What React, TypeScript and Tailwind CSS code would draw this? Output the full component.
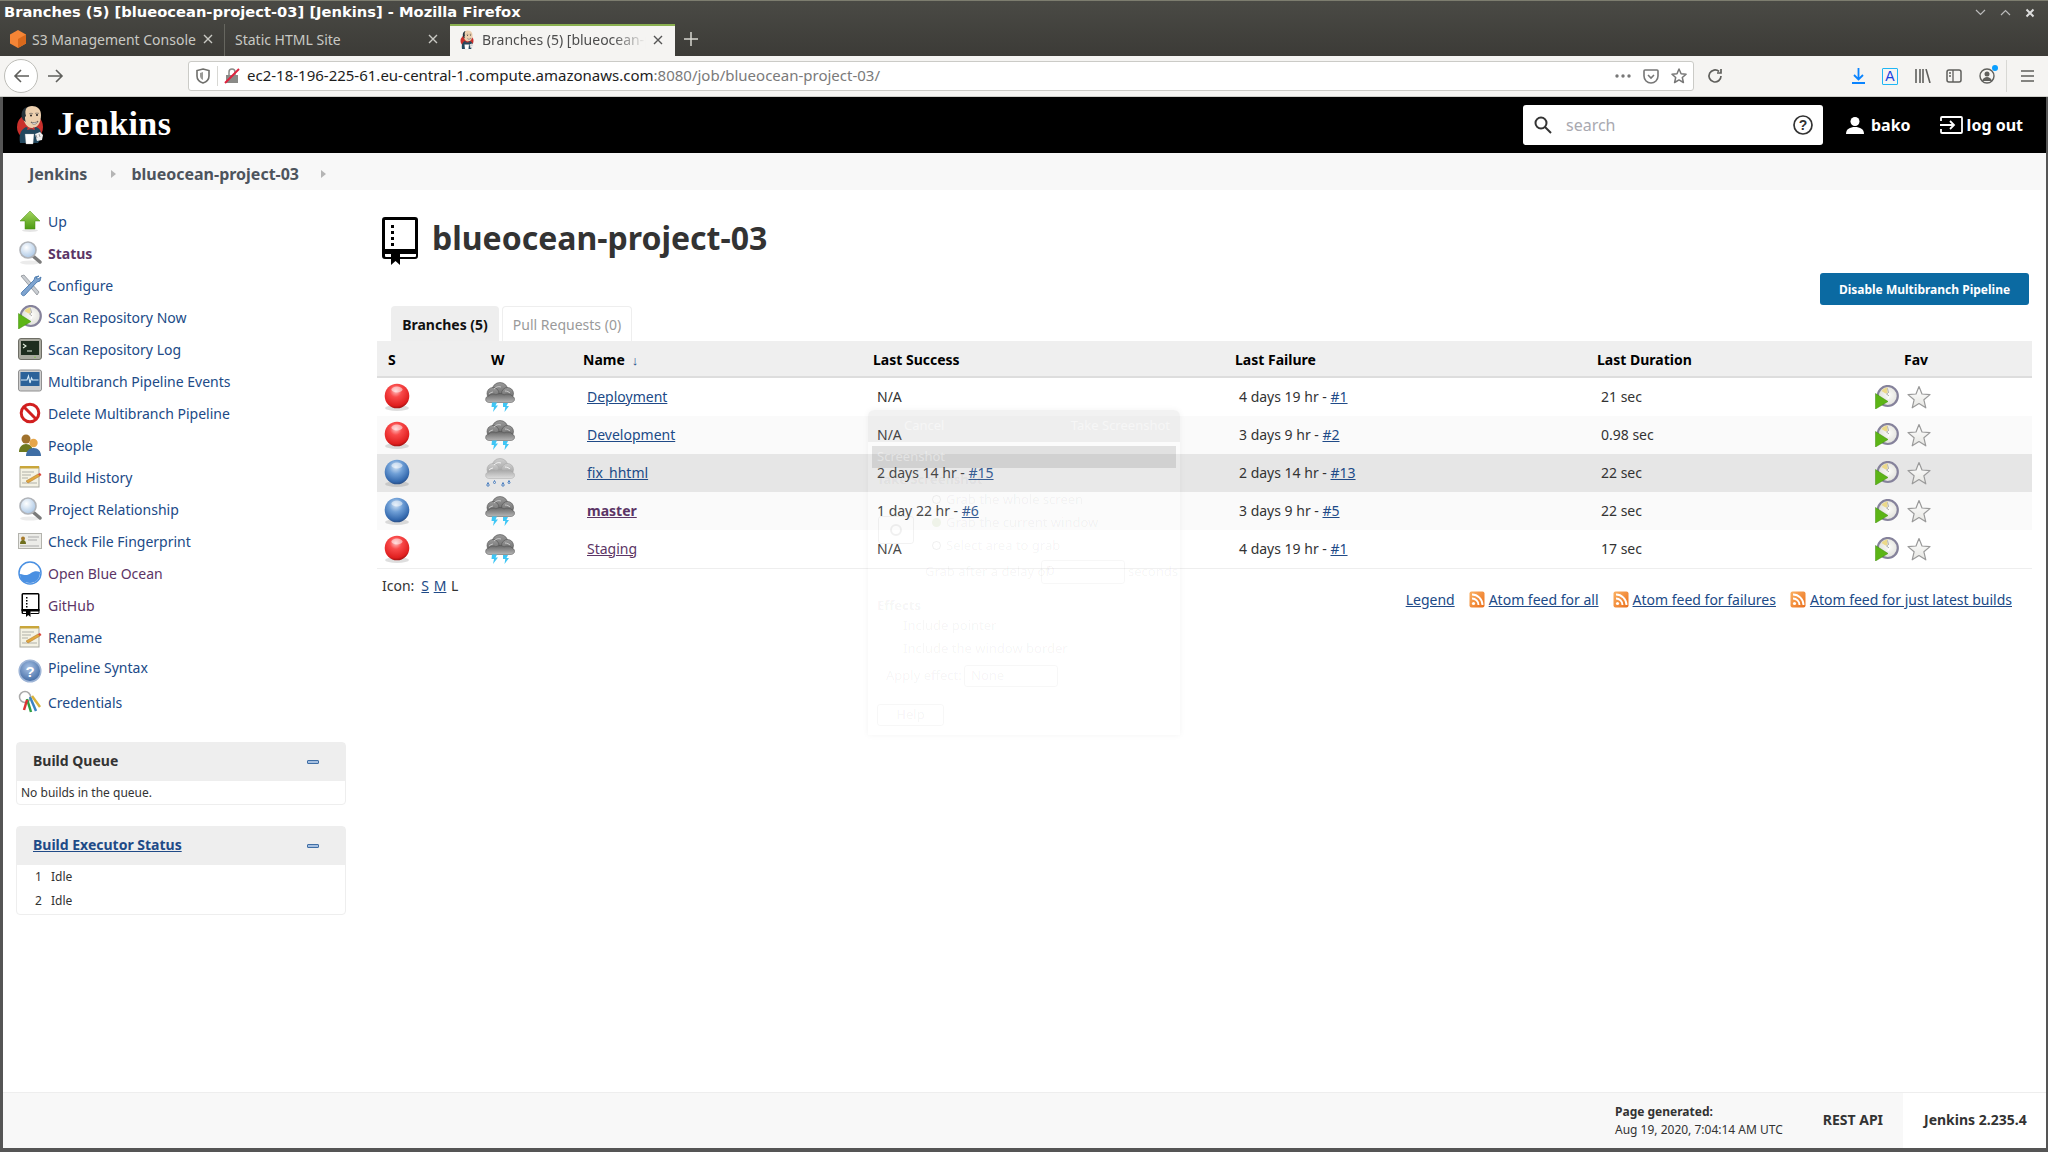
import React from "react";

const Defs = () => (
  <svg className="absolute w-0 h-0" aria-hidden="true">
    <defs>
      <radialGradient id="red" cx="45%" cy="30%" r="70%">
        <stop offset="0" stopColor="#ffc0c0" />
        <stop offset="0.35" stopColor="#f94a4a" />
        <stop offset="0.85" stopColor="#e01f1f" />
        <stop offset="1" stopColor="#a51212" />
      </radialGradient>
      <radialGradient id="blue" cx="45%" cy="30%" r="70%">
        <stop offset="0" stopColor="#d4e4f5" />
        <stop offset="0.4" stopColor="#6f9fd6" />
        <stop offset="0.85" stopColor="#3469ae" />
        <stop offset="1" stopColor="#2a4f87" />
      </radialGradient>
      <linearGradient id="cloud" x1="0" y1="0" x2="0" y2="1">
        <stop offset="0" stopColor="#9a9a9a" />
        <stop offset="1" stopColor="#666666" />
      </linearGradient>
      <linearGradient id="cloudb" x1="0" y1="0" x2="0" y2="1">
        <stop offset="0" stopColor="#666666" />
        <stop offset="1" stopColor="#b5b5b5" />
      </linearGradient>
      <linearGradient id="cloudl" x1="0" y1="0" x2="0" y2="1">
        <stop offset="0" stopColor="#cfcfcf" />
        <stop offset="1" stopColor="#9a9a9a" />
      </linearGradient>
      <linearGradient id="cloudlb" x1="0" y1="0" x2="0" y2="1">
        <stop offset="0" stopColor="#a5a5a5" />
        <stop offset="1" stopColor="#dddddd" />
      </linearGradient>
      <radialGradient id="dial" cx="55%" cy="45%" r="60%">
        <stop offset="0" stopColor="#fbfbf8" />
        <stop offset="1" stopColor="#dcdcd6" />
      </radialGradient>
      <linearGradient id="greenup" x1="0" y1="0" x2="0" y2="1">
        <stop offset="0" stopColor="#a4d55e" />
        <stop offset="1" stopColor="#4c9a13" />
      </linearGradient>
      <linearGradient id="rss" x1="0" y1="0" x2="1" y2="1">
        <stop offset="0" stopColor="#fbb163" />
        <stop offset="1" stopColor="#ea6f1c" />
      </linearGradient>
      <radialGradient id="lens" cx="40%" cy="35%" r="70%">
        <stop offset="0" stopColor="#ffffff" />
        <stop offset="1" stopColor="#a6c4e4" />
      </radialGradient>
      <radialGradient id="q" cx="45%" cy="35%" r="70%">
        <stop offset="0" stopColor="#a9c3e6" />
        <stop offset="1" stopColor="#3a649f" />
      </radialGradient>
      <linearGradient id="star" x1="0" y1="0" x2="0" y2="1">
        <stop offset="0" stopColor="#ffffff" />
        <stop offset="1" stopColor="#e6e6e2" />
      </linearGradient>
    </defs>
  </svg>
);

const Ball = ({ color }: { color: "red" | "blue" }) => (
  <svg width="26" height="28" viewBox="0 0 26 28" className="block">
    <ellipse cx="13" cy="25" rx="12" ry="3" fill="#000" opacity="0.13" />
    <circle cx="13" cy="13" r="12.3" fill={`url(#${color})`} />
    <ellipse cx="13" cy="6.5" rx="5.5" ry="3" fill="#fff" opacity="0.5" />
  </svg>
);

const Weather = ({ rain }: { rain?: boolean }) => {
  const top = rain ? "url(#cloudl)" : "url(#cloud)";
  const bottom = rain ? "url(#cloudlb)" : "url(#cloudb)";
  const edge = rain ? "#a8a8a8" : "#4f4f4f";
  return (
    <svg width="30" height="30" viewBox="0 0 30 30" className="block">
      <circle cx="15" cy="8.500" r="8" fill={top} stroke={edge} strokeWidth="0.600" />
      <circle cx="22.500" cy="11.500" r="6" fill={top} stroke={edge} strokeWidth="0.600" />
      <circle cx="8" cy="11.500" r="6" fill={top} stroke={edge} strokeWidth="0.600" />
      <path d="M1 19c-1-2 0-5 3-5 1-2 5-3 7-1 2-2 6-2 8 0 3-2 7-1 8 1 3 1 3 4 2 5-1 1-2 1.500-3 1.500H4c-1 0-2-.5-3-1.500z" fill={bottom} stroke={edge} strokeWidth="0.500" />
      <path d="M9 7c2-2 4-3 7-2M4 12c1-1 3-2 4-2M20 9c2 0 4 1 5 2" fill="none" stroke={rain ? "#f2f2f2" : "#c9c9c9"} strokeWidth="1" />
      {rain ? (
        <g fill="none" stroke="#4a7fc0" strokeWidth="1">
          <path d="M3 24.500l-1.200 2.500a1.200 1.200 0 1 0 2.400 0zM9.500 22.500l-1 2a1 1 0 1 0 2 0zM18 24.500l-1.200 2.500a1.200 1.200 0 1 0 2.400 0zM24 22.500l-1 2a1 1 0 1 0 2 0z" />
        </g>
      ) : (
        <g fill="#3fc6f5">
          <path d="M7 20.500h5l-1.500 3h2.500l-5 6.500 1-5H6.500zM18 21h5l-1.500 3H24l-4.500 6 .8-5H18z" />
        </g>
      )}
    </svg>
  );
};

const ClockPlay = ({ s = 24 }: { s?: number }) => (
  <svg width={s} height={s} viewBox="0 0 24 24" className="block">
    <circle cx="12.800" cy="11" r="10" fill="url(#dial)" stroke="#85829b" strokeWidth="2.200" />
    <path d="M13 2.500v7.500L6.500 6c1.500-2 4-3.500 6.500-3.500z" fill="#ecd98a" />
    <path d="M12.500 3.500l1 4-2 1.500 2.500 2-1 3" fill="none" stroke="#fff" strokeWidth="1.300" />
    <path d="M12.500 3.500l1 4-2 1.500 2.500 2" fill="none" stroke="#555" strokeWidth="0.500" />
    <path d="M0.500 8.500L13 16.500 0.500 24z" fill="#5cb516" stroke="#3f8d08" strokeWidth="0.500" />
  </svg>
);

const Star = () => (
  <svg width="24" height="24" viewBox="0 0 24 24" className="block">
    <path d="M12 1.500l3 7.500 8 .6-6.100 5.200 1.900 8L12 18.500 5.200 22.800l1.900-8L1 9.600l8-.6z" fill="url(#star)" stroke="#9a9a9a" strokeWidth="1.200" strokeLinejoin="round" />
  </svg>
);

const Rss = () => (
  <svg width="16" height="17" viewBox="0 0 16 17" className="block">
    <rect x="0.500" y="0.500" width="15" height="16" rx="2" fill="url(#rss)" />
    <circle cx="4.500" cy="12.500" r="1.600" fill="#fff" />
    <path d="M3 7.500a6.500 6.500 0 0 1 6.500 6.500M3 3.500a10.500 10.500 0 0 1 10.500 10.500" fill="none" stroke="#fff" strokeWidth="1.900" />
  </svg>
);

const Lens = () => (
  <svg width="24" height="24" viewBox="0 0 24 24" className="block">
    <ellipse cx="12" cy="21.500" rx="10" ry="2" fill="#000" opacity="0.08" />
    <path d="M15 15l7 6" stroke="#7b7b7b" strokeWidth="3.500" strokeLinecap="round" />
    <circle cx="10" cy="9" r="8" fill="url(#lens)" stroke="#b0b3b8" strokeWidth="1.600" />
  </svg>
);

const Notepad = () => (
  <svg width="24" height="24" viewBox="0 0 24 24" className="block">
    <rect x="2" y="2" width="19" height="20" fill="#f4f2e4" stroke="#a9a9a0" strokeWidth="1" />
    <rect x="2" y="1" width="19" height="2.500" fill="#c9a63b" />
    <path d="M4 7h12M4 10h9M4 13h6M4 18h15" stroke="#b0b0a8" strokeWidth="1" />
    <path d="M8 16l12-7 2 2-12 7z" fill="#e2a73d" stroke="#a9752a" strokeWidth="0.500" />
    <path d="M20 9l2-1 1.500 2-1.500 1z" fill="#d9453a" />
  </svg>
);

const BookIcon = ({ w, h }: { w: number; h: number }) => (
  <svg width={w} height={h} viewBox="0 0 36 48" className="block">
    <path fillRule="evenodd" d="M3 0h30a3 3 0 0 1 3 3v36a3 3 0 0 1-3 3H18v-2h15a1 1 0 0 0 1-1v-2H3v2a1 1 0 0 0 1 1h5v2H3a3 3 0 0 1-3-3V3a3 3 0 0 1 3-3zM3 3v29h30V3z" fill="#000" />
    <path d="M9 8h3v3H9zM9 14h3v3H9zM9 20h3v3H9zM9 26h3v3H9z" fill="#000" />
    <path d="M9 36h9v12l-4.500-4-4.500 4z" fill="#000" />
    <rect x="0" y="32" width="36" height="4" fill="#000" />
  </svg>
);

const JenkinsHead = ({ h }: { h: number }) => (
  <svg height={h} width={(h * 30) / 40} viewBox="0 0 30 40" className="block">
    <circle cx="14" cy="22" r="13" fill="#c9302c" />
    <path d="M7 12C6 5 11 1 16 1s9 3 9 9c0 7-3 13-9 13-5 0-8-5-9-11z" fill="#eccfae" />
    <path d="M7 15C4 10 6 3 11 2c-2 3-2 6-1 9l-1 1c0 2 0 3 1 5z" fill="#26323a" />
    <circle cx="15" cy="10.500" r="1" fill="#231f20" />
    <circle cx="21" cy="10" r="1" fill="#231f20" />
    <path d="M13 9c1-1 3-1 4 0M19 8.500c1-.5 3-.5 4 0" fill="none" stroke="#555" strokeWidth="0.600" />
    <path d="M15 17c2 1 5 1 7-1-1 4-6 4-7 1z" fill="#fff" stroke="#231f20" strokeWidth="0.500" />
    <path d="M4 38c-1-8 0-13 6-16l5 2 5-2c5 2 6 6 5 11l-3 5H6z" fill="#23485e" />
    <path d="M12 22l3 2.500 3-2.500 1 3-4-1-4 1z" fill="#d33833" />
    <path d="M9 29h9l-1 10H10z" fill="#fff" stroke="#999" strokeWidth="0.300" />
    <path d="M19 29l5-2 3 3-1 5-5 1z" fill="#eee" />
    <path d="M20 30l1 3M23 29l1 3" stroke="#777" strokeWidth="0.700" />
  </svg>
);

const SideIcon = ({ name }: { name: string }) => {
  switch (name) {
    case "up":
      return (
        <svg width="24" height="24" viewBox="0 0 24 24" className="block">
          <ellipse cx="12" cy="21.500" rx="8" ry="1.500" fill="#000" opacity="0.1" />
          <path d="M12 2l10 10h-5v8H7v-8H2z" fill="url(#greenup)" stroke="#4a8d12" strokeWidth="0.500" />
        </svg>
      );
    case "lens":
      return <Lens />;
    case "config":
      return (
        <svg width="24" height="24" viewBox="0 0 24 24" className="block">
          <path d="M3 3l3-1 15 17-2 3z" fill="#c9cdd2" stroke="#8a8f96" strokeWidth="0.800" />
          <path d="M21 3l-4 1-1 3-12 12c-1 1-1 2 0 3s2 1 3 0L19 9l3-1 1-4-3 2-2-1z" fill="#7fa4cf" stroke="#3c6ea6" strokeWidth="0.800" />
        </svg>
      );
    case "clock":
      return <ClockPlay />;
    case "terminal":
      return (
        <svg width="24" height="24" viewBox="0 0 24 24" className="block">
          <rect x="0.500" y="1.500" width="23" height="21" rx="2.500" fill="#a9a99f" stroke="#6e6e66" />
          <rect x="3" y="4" width="18" height="14" fill="#1f2d1f" />
          <path d="M5 7l3 2-3 2M9 14h5" fill="none" stroke="#e6f0e0" strokeWidth="1.100" />
          <circle cx="17" cy="20.300" r="0.800" fill="#7fc241" />
        </svg>
      );
    case "events":
      return (
        <svg width="24" height="24" viewBox="0 0 24 24" className="block">
          <rect x="0.500" y="1" width="23" height="21" rx="2" fill="#cfcfcf" stroke="#909090" />
          <rect x="2.500" y="3" width="19" height="14" fill="#2c6299" />
          <path d="M3 11h6l1.500-4 1.500 7 1.500-5 1 2h6" fill="none" stroke="#d7ecf9" strokeWidth="1.100" />
        </svg>
      );
    case "delete":
      return (
        <svg width="24" height="24" viewBox="0 0 24 24" className="block">
          <circle cx="12" cy="12" r="8.800" fill="#fff" stroke="#d11f1f" strokeWidth="3" />
          <path d="M5.800 5.800l12.400 12.400" stroke="#d11f1f" strokeWidth="3" />
        </svg>
      );
    case "people":
      return (
        <svg width="24" height="24" viewBox="0 0 24 24" className="block">
          <circle cx="8" cy="6" r="4.500" fill="#a0722d" />
          <path d="M1 19c0-5 3-8 7-8s7 3 7 8z" fill="#6d7a1f" />
          <circle cx="15.500" cy="10" r="4.200" fill="#e6a64a" />
          <path d="M8 23c0-5 3-8 7.500-8S23 18 23 23z" fill="#3f6ea5" />
        </svg>
      );
    case "notepad":
      return <Notepad />;
    case "finger":
      return (
        <svg width="24" height="24" viewBox="0 0 24 24" className="block">
          <rect x="0.500" y="4.500" width="23" height="15" fill="#ecece8" stroke="#b3b3ad" />
          <circle cx="5" cy="9.500" r="2" fill="#a77a2b" />
          <path d="M2 15c0-3 1.500-4 3-4s3 1 3 4z" fill="#70701f" />
          <path d="M10 8h11M10 11h9M2 17h19" stroke="#aaa" strokeWidth="1" />
        </svg>
      );
    case "ocean":
      return (
        <svg width="24" height="24" viewBox="0 0 24 24" className="block">
          <circle cx="12" cy="12" r="11" fill="#fff" stroke="#4a90e2" strokeWidth="1.500" />
          <path d="M2 13c5 1 7 2 11-1 3-2 6-2 9-1 0 7-4 11-10 11S2 19 2 13z" fill="#4a90e2" />
        </svg>
      );
    case "book":
      return <BookIcon w={19} h={24} />;
    case "help":
      return (
        <svg width="24" height="24" viewBox="0 0 24 24" className="block">
          <circle cx="12" cy="12" r="10.800" fill="url(#q)" stroke="#9db4d6" strokeWidth="1.500" />
          <text x="12" y="17.500" textAnchor="middle" fontSize="15" fontWeight="700" fill="#fff" fontFamily="'Liberation Sans',sans-serif">?</text>
        </svg>
      );
    case "keys":
      return (
        <svg width="24" height="24" viewBox="0 0 24 24" className="block">
          <circle cx="7" cy="7" r="5.500" fill="none" stroke="#aaa" strokeWidth="1.500" />
          <path d="M9 9l4 13" stroke="#2f9e44" strokeWidth="2.500" />
          <path d="M12 7l6 14" stroke="#3b82c4" strokeWidth="2.500" />
          <path d="M14 6l8 11" stroke="#d9b23a" strokeWidth="2.500" />
          <path d="M9 10l-3 10" stroke="#d33" strokeWidth="2.500" />
        </svg>
      );
  }
  return null;
};

type Item = { label: string; icon: string; visited?: boolean; bold?: boolean };
const items: Item[] = [
  { label: "Up", icon: "up" },
  { label: "Status", icon: "lens", visited: true, bold: true },
  { label: "Configure", icon: "config" },
  { label: "Scan Repository Now", icon: "clock" },
  { label: "Scan Repository Log", icon: "terminal" },
  { label: "Multibranch Pipeline Events", icon: "events" },
  { label: "Delete Multibranch Pipeline", icon: "delete" },
  { label: "People", icon: "people" },
  { label: "Build History", icon: "notepad" },
  { label: "Project Relationship", icon: "lens" },
  { label: "Check File Fingerprint", icon: "finger" },
  { label: "Open Blue Ocean", icon: "ocean", visited: true },
  { label: "GitHub", icon: "book", visited: true },
  { label: "Rename", icon: "notepad" },
];

const Minus = () => (
  <div className="w-[12px] h-[4px] mt-[2px] bg-[#a5bfe0] border border-[#3f6ea5] rounded-[1px]" />
);

const rows = [
  { ball: "red" as const, name: "Deployment", succ: "N/A", succL: "", fail: "4 days 19 hr - ", failL: "#1", dur: "21 sec", bg: "bg-white" },
  { ball: "red" as const, name: "Development", succ: "N/A", succL: "", fail: "3 days 9 hr - ", failL: "#2", dur: "0.98 sec", bg: "bg-[#fafafa]" },
  { ball: "blue" as const, name: "fix_hhtml", succ: "2 days 14 hr - ", succL: "#15", fail: "2 days 14 hr - ", failL: "#13", dur: "22 sec", bg: "bg-[#e6e6e6]", rain: true },
  { ball: "blue" as const, name: "master", succ: "1 day 22 hr - ", succL: "#6", fail: "3 days 9 hr - ", failL: "#5", dur: "22 sec", bg: "bg-[#fafafa]", bold: true },
  { ball: "red" as const, name: "Staging", succ: "N/A", succL: "", fail: "4 days 19 hr - ", failL: "#1", dur: "17 sec", bg: "bg-white", visited: true },
];

const Tab = ({ children, close, active, cls }: { children: React.ReactNode; close: boolean; active?: boolean; cls: string }) => (
  <div className={`flex items-center h-full ${cls} ${active ? "bg-[#f5f4f2] border-t-2 border-[#8ab050] text-[#4d4d4d] pb-[3px]" : "text-[#c9c9c4] pb-[2px]"}`}>
    {children}
    {close && (
      <span className="ml-auto">
        <svg width="12" height="12" viewBox="0 0 12 12" className="block">
          <path d="M2 2l8 8M10 2l-8 8" stroke={active ? "#555" : "#c9c9c4"} strokeWidth="1.400" />
        </svg>
      </span>
    )}
  </div>
);

const Ghost = () => (
  <div className="absolute left-[868px] top-[410px] w-[312px] h-[325px] pointer-events-none rounded-t-[6px] shadow-[0_0_6px_rgba(0,0,0,0.05)] bg-white/10 text-[13px] text-black/[0.05]">
    <div className="h-[32px] rounded-t-[6px] bg-black/[0.05] flex items-center justify-between px-[36px] pr-[10px] text-white/50 text-[13px]">
      <span>Cancel</span>
      <span>Take Screenshot</span>
    </div>
    <div className="mx-[4px] mt-[4px] h-[22px] bg-black/[0.1] flex items-center px-[5px] text-white/40 text-[13px]">Screenshot</div>
    <div className="pl-[9px] mt-[2px] font-bold h-[20px]">Take Screenshot</div>
    <div className="flex pl-[10px]">
      <div className="mt-[26px] w-[36px] h-[28px] border border-black/[0.05] rounded-[3px] flex items-center justify-center">
        <div className="w-[12px] h-[12px] rounded-full border-2 border-black/[0.06]" />
      </div>
      <div className="ml-[18px] flex flex-col gap-[5px] leading-[18px]">
        <div className="flex items-center gap-[5px]"><span className="w-[9px] h-[9px] rounded-full border border-black/[0.06]" /><span>Grab the whole screen</span></div>
        <div className="flex items-center gap-[5px]"><span className="w-[9px] h-[9px] rounded-full bg-[#8ab050]/10" /><span>Grab the current window</span></div>
        <div className="flex items-center gap-[5px]"><span className="w-[9px] h-[9px] rounded-full border border-black/[0.06]" /><span>Select area to grab</span></div>
      </div>
    </div>
    <div className="flex items-center pl-[57px] mt-[6px] h-[24px] whitespace-nowrap">
      <span className="w-[116px]">Grab after a delay of</span>
      <span className="w-[84px] h-[24px] border border-black/[0.03] rounded-[3px] pl-[5px]">0</span>
      <span className="ml-[3px]">seconds</span>
    </div>
    <div className="pl-[9px] mt-[12px] font-bold h-[18px]">Effects</div>
    <div className="pl-[35px] leading-[23px]">
      <div>Include pointer</div>
      <div>Include the window border</div>
    </div>
    <div className="flex items-center pl-[18px] mt-[4px] h-[23px]">
      <span className="w-[78px]">Apply effect:</span>
      <span className="w-[94px] h-[22px] border border-black/[0.03] rounded-[3px] pl-[6px]">None</span>
    </div>
    <div className="ml-[9px] mt-[17px] w-[67px] h-[22px] border border-black/[0.03] rounded-[3px] text-center">Help</div>
  </div>
);

const visited = "text-[#5c3566]";
const link = "text-[#204a87]";

export default function App() {
  return (
    <div className="relative w-[2048px] h-[1152px] overflow-hidden flex flex-col bg-white font-['Noto_Sans',sans-serif] text-[14px] text-[#333]">
      <Defs />
      {/* title bar */}
      <div className="h-[56px] shrink-0 flex flex-col bg-gradient-to-b from-[#4a4a45] to-[#3c3b37] border-t border-[#7d7d6f]">
        <div className="h-[23px] shrink-0 flex items-center pl-[4px] pr-[13px] text-white font-bold text-[14.700px] leading-none whitespace-nowrap font-['DejaVu_Sans',sans-serif]">
          <span>Branches (5) [blueocean-project-03] [Jenkins] - Mozilla Firefox</span>
          <div className="ml-auto flex items-center gap-[14px]">
            <svg width="11" height="7" viewBox="0 0 11 7"><path d="M1 1l4.500 4.500L10 1" fill="none" stroke="#bbb" strokeWidth="1.200" /></svg>
            <svg width="11" height="7" viewBox="0 0 11 7"><path d="M1 6l4.500-4.500L10 6" fill="none" stroke="#bbb" strokeWidth="1.200" /></svg>
            <svg width="10" height="10" viewBox="0 0 10 10"><path d="M1.500 1.500l7 7M8.500 1.500l-7 7" stroke="#ddd" strokeWidth="2" /></svg>
          </div>
        </div>
        <div className="flex-1 flex items-stretch text-[14px] whitespace-nowrap">
          <Tab close cls="w-[225px] pl-[9px] pr-[10px] border-r border-[#66665f]">
            <svg width="18" height="20" viewBox="0 0 18 20" className="mr-[5px]"><path d="M9 1l8 4.500v9L9 19l-8-4.500v-9z" fill="#f58536" /><path d="M9 10l8-4.500v9L9 19z" fill="#d9691c" /></svg>
            <span>S3 Management Console</span>
          </Tab>
          <Tab close cls="w-[225px] pl-[10px] pr-[11px]"><span>Static HTML Site</span></Tab>
          <Tab close active cls="w-[225px] pl-[10px] pr-[11px]">
            <JenkinsHead h={20} />
            <span className="ml-[7px] w-[164px] overflow-hidden [mask-image:linear-gradient(to_right,black_80%,transparent)]">Branches (5) [blueocean-project-03]</span>
          </Tab>
          <div className="flex items-center ml-[9px] pb-[2px]">
            <svg width="14" height="14" viewBox="0 0 14 14"><path d="M7 0v14M0 7h14" stroke="#d6d6d0" strokeWidth="1.500" /></svg>
          </div>
        </div>
      </div>
      {/* toolbar */}
      <div className="h-[41px] shrink-0 bg-[#f5f4f2] border-b border-[#cfcfcb] flex items-center">
        <div className="ml-[4px] w-[34px] h-[34px] rounded-full border border-[#bdbdb8] bg-white flex items-center justify-center">
          <svg width="17" height="16" viewBox="0 0 17 16"><path d="M16 8H2M8 2L2 8l6 6" fill="none" stroke="#5f5f5c" strokeWidth="1.600" /></svg>
        </div>
        <svg width="17" height="16" viewBox="0 0 17 16" className="ml-[9px]"><path d="M1 8h14M9 2l6 6-6 6" fill="none" stroke="#5f5f5c" strokeWidth="1.600" /></svg>
        <div className="ml-[124px] w-[1506px] h-[30px] bg-white border border-[#cbcbc7] rounded-[3px] flex items-center pl-[7px] pr-[6px] text-[15px] whitespace-nowrap">
          <svg width="14" height="16" viewBox="0 0 14 16"><path d="M7 1l6 1.500V8c0 3.500-3 6-6 7-3-1-6-3.500-6-7V2.500z" fill="none" stroke="#6f6f6c" strokeWidth="1.600" /><path d="M7 4v8c-2-1-3-2.500-3-4V5z" fill="#9b9b98" /></svg>
          <div className="ml-[7px] w-px h-[20px] bg-[#d8d8d4]" />
          <svg width="16" height="16" viewBox="0 0 16 16" className="ml-[6px]"><rect x="2" y="7" width="12" height="8" fill="#8a8a87" /><path d="M5 7V4a3 3 0 0 1 6 0v3" fill="none" stroke="#8a8a87" strokeWidth="1.500" /><path d="M1 15L15 1" stroke="#e0223e" strokeWidth="2" /></svg>
          <span className="ml-[7px] -mt-[1px] text-[#1d1d1d]">ec2-18-196-225-61.eu-central-1.compute.amazonaws.com</span>
          <span className="-mt-[1px] text-[#7a7a7a]">:8080/job/blueocean-project-03/</span>
          <div className="ml-auto flex items-center">
            <svg width="16" height="4" viewBox="0 0 16 4"><circle cx="2" cy="2" r="1.700" fill="#777" /><circle cx="8" cy="2" r="1.700" fill="#777" /><circle cx="14" cy="2" r="1.700" fill="#777" /></svg>
            <svg width="16" height="15" viewBox="0 0 16 15" className="ml-[12px]"><path d="M1 2a1 1 0 0 1 1-1h12a1 1 0 0 1 1 1v5a7 7 0 0 1-14 0z" fill="none" stroke="#777" strokeWidth="1.600" /><path d="M5 6l3 3 3-3" fill="none" stroke="#777" strokeWidth="1.600" /></svg>
            <svg width="16" height="16" viewBox="0 0 16 16" className="ml-[12px]"><path d="M8 1l2.100 4.700 5 .5-3.800 3.300 1.100 5L8 11.900 3.600 14.500l1.100-5L1 6.200l5-.5z" fill="none" stroke="#777" strokeWidth="1.500" strokeLinejoin="round" /></svg>
          </div>
        </div>
        <svg width="16" height="16" viewBox="0 0 16 16" className="ml-[13px]"><path d="M14 8a6 6 0 1 1-2-4.500M14 1v4h-4" fill="none" stroke="#5f5f5c" strokeWidth="1.700" /></svg>
        <svg width="13" height="16" viewBox="0 0 13 16" className="ml-[129px]"><path d="M6.500 0v11M2 7l4.500 4.500L11 7M0 15h13" fill="none" stroke="#0a84ff" strokeWidth="1.800" /></svg>
        <div className="ml-[17px] w-[16px] h-[17px] border border-[#1fb6f5] rounded-[1px] flex items-center justify-center text-[14px] leading-none text-[#1a3fe0] font-['Liberation_Sans',sans-serif]">A</div>
        <svg width="16" height="14" viewBox="0 0 16 14" className="ml-[17px]"><path d="M1 0v14M5 0v14M8 0v14M11 0l4 14" fill="none" stroke="#5f5f5c" strokeWidth="1.600" /></svg>
        <svg width="16" height="14" viewBox="0 0 16 14" className="ml-[15px]"><rect x="1" y="1" width="14" height="12" rx="2" fill="none" stroke="#5f5f5c" strokeWidth="1.500" /><path d="M7 1v12M3 4h2M3 7h2" stroke="#5f5f5c" strokeWidth="1.300" /></svg>
        <div className="relative ml-[17px] w-[16px] h-[16px]">
          <svg width="16" height="16" viewBox="0 0 16 16"><circle cx="8" cy="8" r="7" fill="none" stroke="#5f5f5c" strokeWidth="1.400" /><circle cx="8" cy="6" r="2.500" fill="#5f5f5c" /><path d="M3 13c1-3 3-4 5-4s4 1 5 4z" fill="#5f5f5c" /></svg>
          <span className="absolute -top-[3px] -right-[3px] w-[6px] h-[6px] rounded-full bg-[#0a9fff]" />
        </div>
        <div className="ml-[11px] w-px h-[32px] bg-[#d8d8d4]" />
        <svg width="13" height="12" viewBox="0 0 13 12" className="ml-[14px]"><path d="M0 1h13M0 6h13M0 11h13" stroke="#5f5f5c" strokeWidth="1.700" /></svg>
      </div>

      {/* page */}
      <div className="flex-1 min-h-0 flex flex-col border-l-[3px] border-r-[2px] border-b-[4px] border-[#555]">
        <header className="h-[56px] shrink-0 bg-black text-white flex items-center pl-[13px]">
          <JenkinsHead h={40} />
          <span className="ml-[11px] -mt-[3px] font-['Liberation_Serif',serif] font-bold text-[34px] leading-none tracking-[0.4px]">Jenkins</span>
          <div className="ml-auto w-[300px] h-[40px] mr-[23px] bg-white rounded-[3px] flex items-center pl-[11px] pr-[10px]">
            <svg width="18" height="18" viewBox="0 0 18 18"><circle cx="7" cy="7" r="5.500" fill="none" stroke="#333" strokeWidth="2" /><path d="M11 11l6 6" stroke="#333" strokeWidth="2" /></svg>
            <span className="ml-[14px] text-[16px] text-[#a9a9b0]">search</span>
            <svg width="20" height="20" viewBox="0 0 20 20" className="ml-auto"><circle cx="10" cy="10" r="9" fill="none" stroke="#333" strokeWidth="1.700" /><text x="10" y="15" textAnchor="middle" fontSize="14" fontWeight="700" fill="#333" fontFamily="'Liberation Sans',sans-serif">?</text></svg>
          </div>
          <svg width="18" height="17" viewBox="0 0 18 17"><circle cx="9" cy="4.500" r="4.500" fill="#fff" /><path d="M0 17c0-5 4-7 9-7s9 2 9 7z" fill="#fff" /></svg>
          <span className="ml-[7px] text-[16px] font-bold">bako</span>
          <svg width="23" height="18" viewBox="0 0 23 18" className="ml-[29px]"><path d="M1 5V2a1 1 0 0 1 1-1h19a1 1 0 0 1 1 1v14a1 1 0 0 1-1 1H2a1 1 0 0 1-1-1v-3" fill="none" stroke="#fff" strokeWidth="1.800" /><path d="M0 9h13M10 5l4 4-4 4" fill="none" stroke="#fff" strokeWidth="1.800" /></svg>
          <span className="ml-[4px] mr-[23px] text-[16px] font-bold">log out</span>
        </header>
        <div className="h-[37px] shrink-0 bg-[#f8f8f8] flex items-center pl-[26px] pt-[5px] text-[16px] font-bold text-[#4d545d]">
          <span>Jenkins</span>
          <svg width="5" height="8" viewBox="0 0 5 8" className="ml-[24px]"><path d="M0 0l5 4-5 4z" fill="#b5b5b5" /></svg>
          <span className="ml-[15px]">blueocean-project-03</span>
          <svg width="5" height="8" viewBox="0 0 5 8" className="ml-[22px]"><path d="M0 0l5 4-5 4z" fill="#b5b5b5" /></svg>
        </div>

        <div className="flex-1 min-h-0 flex">
          {/* sidebar */}
          <aside className="w-[374px] shrink-0 pt-[15px] pl-[13px]">
            <nav className="pl-[2px]">
              {items.map((it) => (
                <div key={it.label} className="h-[32px] flex items-center">
                  <div className="w-[24px] flex justify-center"><SideIcon name={it.icon} /></div>
                  <span className={`ml-[6px] ${it.visited ? visited : link} ${it.bold ? "font-bold" : ""}`}>{it.label}</span>
                </div>
              ))}
              <div className="h-[33px] flex items-start">
                <div className="w-[24px] mt-[6px]"><SideIcon name="help" /></div>
                <span className={`ml-[6px] mt-[4px] ${link}`}>Pipeline Syntax</span>
              </div>
              <div className="h-[32px] flex items-center">
                <div className="w-[24px]"><SideIcon name="keys" /></div>
                <span className={`ml-[6px] ${link}`}>Credentials</span>
              </div>
            </nav>
            <section className="mt-[24px] w-[330px] border border-[#eee] rounded-[4px]">
              <div className="h-[38px] pb-[3px] bg-[#eee] flex items-center justify-between pl-[16px] pr-[26px] font-bold text-[#333]">
                <span>Build Queue</span>
                <Minus />
              </div>
              <div className="h-[23px] pl-[4px] flex items-center text-[12px]">No builds in the queue.</div>
            </section>
            <section className="mt-[21px] w-[330px] border border-[#eee] rounded-[4px]">
              <div className="h-[38px] pb-[3px] bg-[#eee] flex items-center justify-between pl-[16px] pr-[26px] font-bold">
                <span className={`${link} underline`}>Build Executor Status</span>
                <Minus />
              </div>
              <div className="pb-[1px] text-[12px] leading-[24px]">
                <div className="flex"><span className="w-[20px] ml-[18px]">1</span><span className="-ml-[4px]">Idle</span></div>
                <div className="flex"><span className="w-[20px] ml-[18px]">2</span><span className="-ml-[4px]">Idle</span></div>
              </div>
            </section>
          </aside>

          {/* main */}
          <main className="w-[1655px] shrink-0 flex flex-col">
            <div className="mt-[27px] h-[48px] flex items-center pl-[5px]">
              <BookIcon w={36} h={48} />
              <h1 className="ml-[14px] text-[32px] font-bold leading-none text-[#333] -mt-[6px]">blueocean-project-03</h1>
            </div>
            <div className="mt-[8px] h-[32px] flex justify-end pr-[3px]">
              <div className="w-[209px] h-[32px] pt-[1px] bg-[#0b6aa2] rounded-[3px] flex items-center justify-center text-white font-bold text-[12px]">Disable Multibranch Pipeline</div>
            </div>
            <div className="mt-[1px] h-[35px] flex items-end pl-[14px] gap-[3px]">
              <div className="w-[108px] h-[35px] pt-[1px] bg-[#eee] rounded-t-[4px] flex items-center justify-center font-bold text-[#111]">Branches (5)</div>
              <div className="w-[130px] h-[35px] border border-b-0 border-[#eee] rounded-t-[4px] flex items-center justify-center text-[#9a9a9a]">Pull Requests (0)</div>
            </div>
            <table className="w-full table-fixed border-separate border-spacing-0">
              <colgroup>
                <col className="w-[103px]" />
                <col className="w-[92px]" />
                <col className="w-[290px]" />
                <col className="w-[362px]" />
                <col className="w-[362px]" />
                <col className="w-[276px]" />
                <col />
              </colgroup>
              <thead>
                <tr className="h-[37px] bg-[#efefef] text-black text-left">
                  <th className="pl-[11px] pt-[2px] font-bold border-b-2 border-[#ddd]">S</th>
                  <th className="pl-[11px] pt-[2px] font-bold border-b-2 border-[#ddd]">W</th>
                  <th className="pl-[11px] pt-[2px] font-bold border-b-2 border-[#ddd]">Name<span className="ml-[7px] text-[13px] font-normal text-[#204a87]">↓</span></th>
                  <th className="pl-[11px] pt-[2px] font-bold border-b-2 border-[#ddd]">Last Success</th>
                  <th className="pl-[11px] pt-[2px] font-bold border-b-2 border-[#ddd]">Last Failure</th>
                  <th className="pl-[11px] pt-[2px] font-bold border-b-2 border-[#ddd]">Last Duration</th>
                  <th className="pl-[42px] pt-[2px] font-bold border-b-2 border-[#ddd]">Fav</th>
                </tr>
              </thead>
              <tbody>
                {rows.map((r) => (
                  <tr key={r.name} className={`h-[38px] ${r.bg}`}>
                    <td className="pl-[7px]"><Ball color={r.ball} /></td>
                    <td className="pl-[5px]"><Weather rain={r.rain} /></td>
                    <td className="pl-[15px] pb-[2px]">
                      <span className={`underline ${r.bold || r.visited ? visited : link} ${r.bold ? "font-bold" : ""}`}>{r.name}</span>
                    </td>
                    <td className="pl-[15px] pb-[2px]">{r.succ}{r.succL && <span className={`${link} underline`}>{r.succL}</span>}</td>
                    <td className="pl-[15px] pb-[2px]">{r.fail}<span className={`${link} underline`}>{r.failL}</span></td>
                    <td className="pl-[15px] pb-[2px]">{r.dur}</td>
                    <td className="pl-[13px]">
                      <div className="flex items-center gap-[8px]"><ClockPlay /><Star /></div>
                    </td>
                  </tr>
                ))}
              </tbody>
            </table>
            <div className="border-t border-[#eee] rounded-b-[4px] flex items-start pl-[5px] pt-[6px] pr-[20px]">
              <span>Icon:<span className="ml-[7px] underline text-[#204a87]">S</span> <span className="ml-[1px] underline text-[#204a87]">M</span> <span className="ml-[1px]">L</span></span>
              <div className="ml-auto mt-[14px] flex items-center">
                <span className={`${link} underline`}>Legend</span>
                <span className="ml-[14px]"><Rss /></span>
                <span className={`ml-[4px] ${link} underline`}>Atom feed for all</span>
                <span className="ml-[14px]"><Rss /></span>
                <span className={`ml-[4px] ${link} underline`}>Atom feed for failures</span>
                <span className="ml-[14px]"><Rss /></span>
                <span className={`ml-[4px] ${link} underline`}>Atom feed for just latest builds</span>
              </div>
            </div>
          </main>
        </div>

        {/* footer */}
        <footer className="h-[56px] shrink-0 border-t border-[#eee] flex">
          <div className="w-[1900px] bg-[#f8f8f8] flex items-center pl-[1612px]">
            <div className="text-[12px] leading-[18px]">
              <div className="font-bold">Page generated:</div>
              <div>Aug 19, 2020, 7:04:14 AM UTC</div>
            </div>
            <span className="ml-[40px] font-bold -mt-[2px]">REST API</span>
          </div>
          <div className="flex-1 flex items-center pl-[21px] pb-[2px] font-bold">Jenkins 2.235.4</div>
        </footer>
      </div>
      <Ghost />
    </div>
  );
}
